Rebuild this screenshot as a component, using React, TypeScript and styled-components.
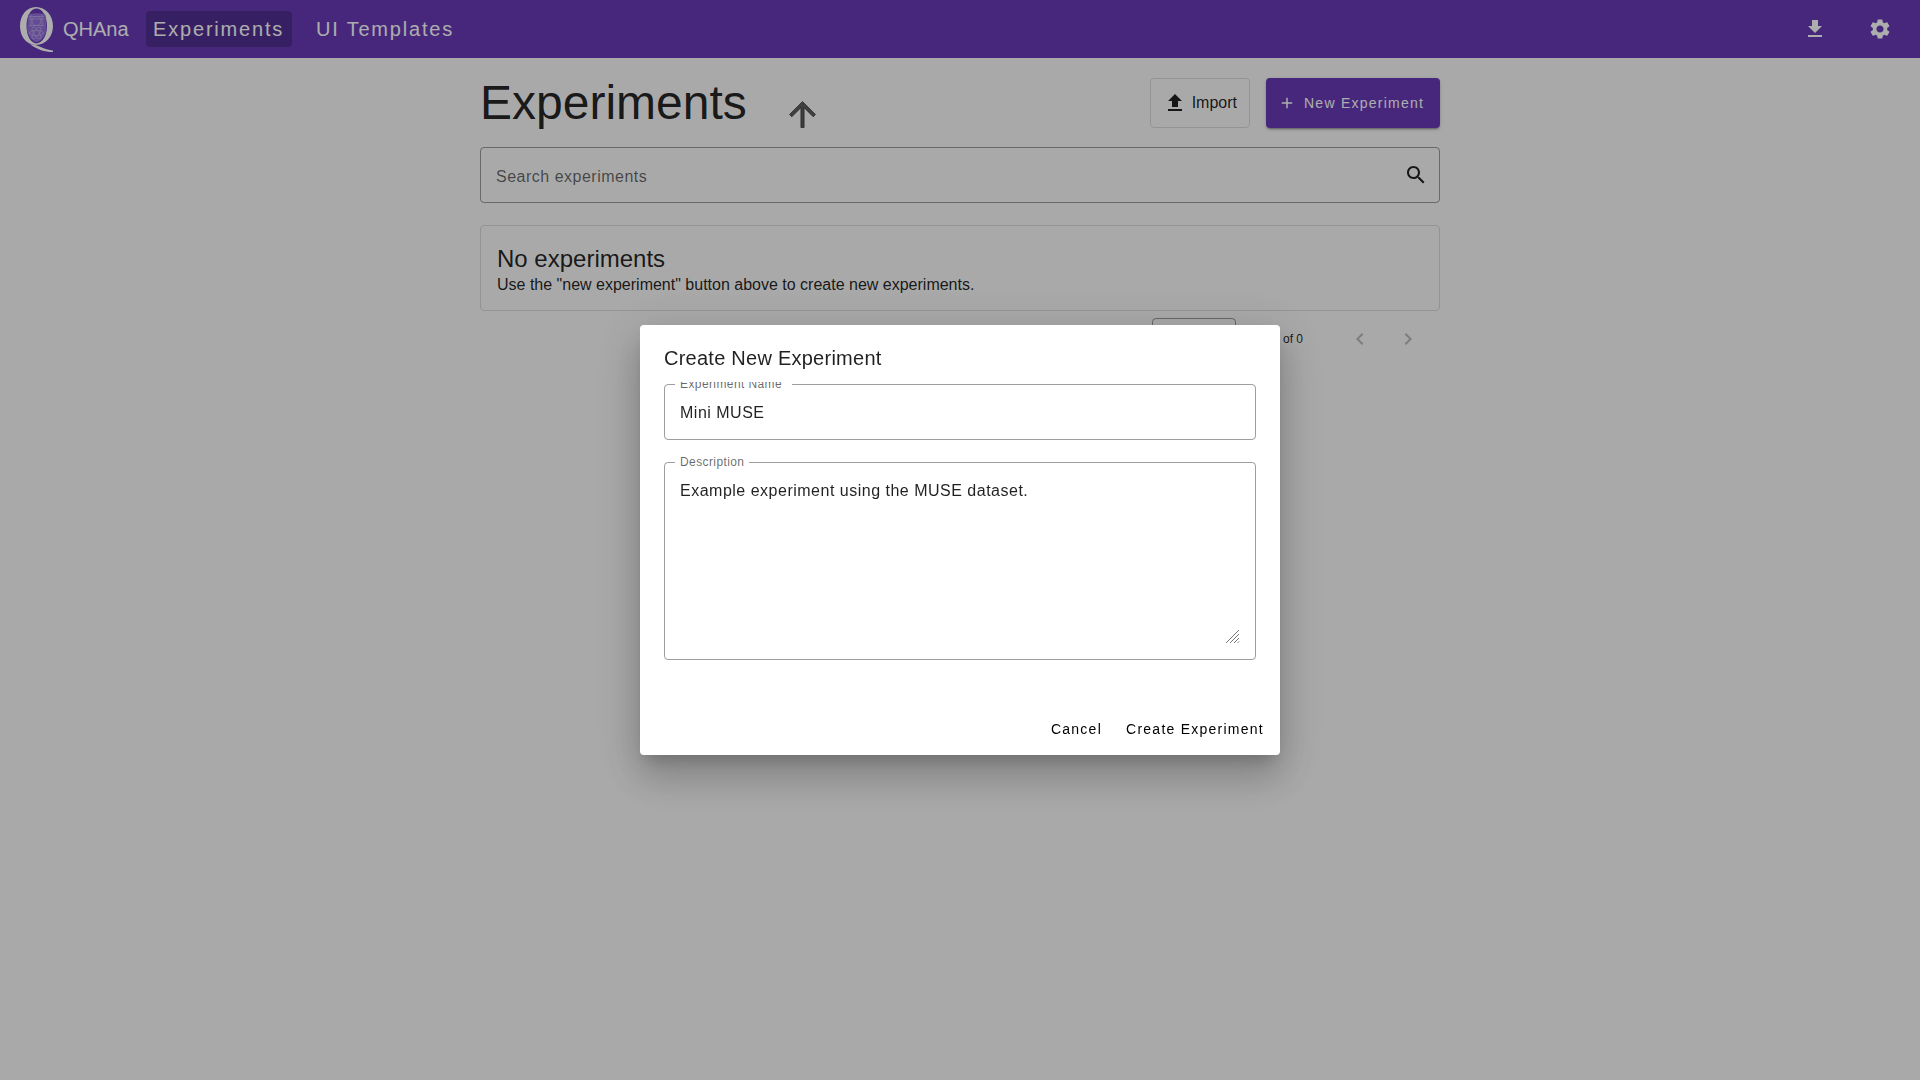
import React from "react";
import styled, { createGlobalStyle } from "styled-components";

const Global = createGlobalStyle`
  html, body { margin: 0; padding: 0; height: 100%; background: #fafafa; }
  body { font-family: "Liberation Sans", Arial, sans-serif; color: rgba(0,0,0,.87); overflow: hidden; }
  * { box-sizing: border-box; }
`;

const AppBar = styled.header`
  height: 58px;
  background: #673ab7;
  color: #fff;
  display: flex;
  align-items: center;
  padding: 0 20px 0 19px;
`;
const Brand = styled.div`
  display: flex;
  align-items: center;
  gap: 9px;
  margin-right: 17px;
  font-size: 20px;
`;
const NavLink = styled.a<{ $active?: boolean }>`
  display: flex;
  align-items: center;
  height: 36px;
  padding: 0 7.5px;
  margin-right: 17px;
  font-size: 20px;
  letter-spacing: 1.8px;
  border-radius: 4px;
  background: ${(p) => (p.$active ? "rgba(0,0,0,.2)" : "transparent")};
`;
const Spacer = styled.div`
  flex: 1;
`;
const BarIcon = styled.button`
  width: 40px;
  height: 40px;
  margin-left: 25px;
  border: 0;
  padding: 0;
  background: none;
  color: #fff;
  display: flex;
  align-items: center;
  justify-content: center;
`;
const Main = styled.main`
  width: 960px;
  margin: 0 auto;
`;
const TitleRow = styled.div`
  display: flex;
  align-items: flex-start;
  padding-top: 20px;
  height: 89px;
`;
const PageTitle = styled.h1`
  margin: 0;
  font-size: 48px;
  font-weight: 400;
  line-height: 50px;
  color: rgba(0,0,0,.87);
`;
const SortButton = styled.button`
  width: 40px;
  height: 40px;
  margin: 16px 0 0 36px;
  padding: 0;
  border: 0;
  background: none;
  color: rgba(0,0,0,.62);
  display: flex;
  align-items: center;
  justify-content: center;
  svg path { stroke: currentColor; stroke-width: .5px; }
`;
const TitleActions = styled.div`
  margin-left: auto;
  display: flex;
  gap: 16px;
`;
const ImportButton = styled.button`
  width: 100px;
  height: 50px;
  display: flex;
  align-items: center;
  justify-content: flex-end;
  gap: 5px;
  padding: 0 12px 0 0;
  border: 1px solid rgba(0,0,0,.12);
  border-radius: 4px;
  background: none;
  font: 400 16px "Liberation Sans", Arial, sans-serif;
  color: rgba(0,0,0,.87);
`;
const PrimaryButton = styled.button`
  width: 174px;
  height: 50px;
  display: flex;
  align-items: center;
  gap: 8px;
  padding: 0 0 0 12px;
  border: 0;
  border-radius: 4px;
  background: #673ab7;
  color: #fff;
  font: 400 14px "Liberation Sans", Arial, sans-serif;
  letter-spacing: 1.25px;
  box-shadow: 0 3px 1px -2px rgba(0,0,0,.2), 0 2px 2px 0 rgba(0,0,0,.14), 0 1px 5px 0 rgba(0,0,0,.12);
`;
const SearchField = styled.div`
  height: 56px;
  margin-bottom: 22px;
  display: flex;
  align-items: center;
  justify-content: space-between;
  padding: 0 11px 0 15px;
  border: 1px solid rgba(0,0,0,.38);
  border-radius: 4px;
`;
const SearchInput = styled.input`
  flex: 1;
  border: 0;
  outline: 0;
  padding: 3px 0 0;
  background: none;
  font: 400 16px "Liberation Sans", Arial, sans-serif;
  letter-spacing: .5px;
  &::placeholder { color: rgba(0,0,0,.6); opacity: 1; }
`;
const EmptyCard = styled.section`
  height: 86px;
  padding: 19px 16px 0;
  border: 1px solid rgba(0,0,0,.12);
  border-radius: 4px;
`;
const EmptyTitle = styled.h2`
  margin: 0;
  font-size: 24px;
  font-weight: 400;
  line-height: 28px;
`;
const EmptyText = styled.p`
  margin: 2px 0 0;
  font-size: 16px;
  line-height: 20px;
`;
const Paginator = styled.div`
  display: flex;
  align-items: flex-start;
  justify-content: flex-end;
  padding: 7px 12px 0 0;
`;
const PageSelect = styled.div`
  width: 84px;
  height: 56px;
  border: 1px solid rgba(0,0,0,.38);
  border-radius: 4px;
`;
const RangeLabel = styled.span`
  width: 67px;
  margin: 14px 29px 0 0;
  text-align: right;
  font-size: 12px;
  line-height: 14px;
`;
const PageButton = styled.button`
  width: 40px;
  height: 40px;
  margin: 1px 0 0 8px;
  padding: 0;
  border: 0;
  background: none;
  color: rgba(0,0,0,.26);
  display: flex;
  align-items: center;
  justify-content: center;
`;
const Backdrop = styled.div`
  position: fixed;
  inset: 0;
  background: rgba(0,0,0,.32);
  display: flex;
  align-items: center;
  justify-content: center;
`;
const Dialog = styled.div`
  width: 640px;
  height: 430px;
  display: flex;
  flex-direction: column;
  background: #fff;
  border-radius: 4px;
  box-shadow: 0 11px 15px -7px rgba(0,0,0,.2), 0 24px 38px 3px rgba(0,0,0,.14), 0 9px 46px 8px rgba(0,0,0,.12);
`;
const DialogTitle = styled.h2`
  height: 57px;
  margin: 0;
  padding: 20px 24px 0;
  font-size: 20px;
  font-weight: 400;
  line-height: 26px;
  letter-spacing: .25px;
  color: rgba(0,0,0,.87);
`;
const DialogBody = styled.div`
  flex: 1;
  min-height: 0;
  overflow: hidden;
  padding: 2px 24px 0;
  display: flex;
  flex-direction: column;
  gap: 22px;
`;
const Field = styled.div<{ $height: number }>`
  position: relative;
  height: ${(p) => p.$height}px;
  flex: none;
  border: 1px solid rgba(0,0,0,.38);
  border-radius: 4px;
`;
const FieldLabel = styled.label<{ $trail: number }>`
  position: absolute;
  top: -8px;
  left: 10px;
  padding: 0 ${(p) => p.$trail}px 0 5px;
  background: #fff;
  font-size: 12px;
  line-height: 14px;
  letter-spacing: .4px;
  color: rgba(0,0,0,.6);
`;
const TextInput = styled.input`
  display: block;
  width: 100%;
  height: 100%;
  padding: 2px 15px 0;
  border: 0;
  outline: 0;
  background: none;
  font: 400 16px "Liberation Sans", Arial, sans-serif;
  letter-spacing: .5px;
  color: rgba(0,0,0,.87);
`;
const TextArea = styled.textarea`
  display: block;
  width: 100%;
  height: 165px;
  margin-top: 18px;
  padding: 0 15px;
  border: 0;
  outline: 0;
  background: none;
  resize: none;
  font: 400 16px/20px "Liberation Sans", Arial, sans-serif;
  letter-spacing: .5px;
  color: rgba(0,0,0,.87);
`;
const ResizeGrip = styled.svg`
  position: absolute;
  right: 15px;
  bottom: 15px;
  width: 15px;
  height: 15px;
`;
const DialogActions = styled.div`
  display: flex;
  justify-content: flex-end;
  gap: 8px;
  padding: 0 8px 8px;
`;
const TextButton = styled.button`
  height: 36px;
  padding: 0 8px;
  border: 0;
  background: none;
  font: 400 14px "Liberation Sans", Arial, sans-serif;
  letter-spacing: 1.25px;
  color: #000;
`;

const Icon = ({ d, size = 24 }: { d: string; size?: number }) => (
  <svg width={size} height={size} viewBox="0 0 24 24" fill="currentColor" aria-hidden="true">
    <path d={d} />
  </svg>
);

const paths = {
  download: "M19 9h-4V3H9v6H5l7 7 7-7zM5 18v2h14v-2H5z",
  upload: "M9 16h6v-6h4l-7-7-7 7h4zm-4 2h14v2H5z",
  up: "M4 12l1.41 1.41L11 7.83V20h2V7.83l5.58 5.59L20 12l-8-8-8 8z",
  add: "M19 13h-6v6h-2v-6H5v-2h6V5h2v6h6v2z",
  search: "M15.5 14h-.79l-.28-.27C15.41 12.59 16 11.11 16 9.5 16 5.91 13.09 3 9.5 3S3 5.91 3 9.5 5.91 16 9.5 16c1.61 0 3.09-.59 4.23-1.57l.27.28v.79l5 4.99L20.49 19l-4.99-5zm-6 0C7.01 14 5 11.99 5 9.5S7.01 5 9.5 5 14 7.01 14 9.5 11.99 14 9.5 14z",
  left: "M15.41 7.41L14 6l-6 6 6 6 1.41-1.41L10.83 12z",
  right: "M10 6L8.59 7.41 13.17 12l-4.58 4.59L10 18l6-6z",
  gear: "M19.14,12.94c0.04-0.3,0.06-0.61,0.06-0.94c0-0.32-0.02-0.64-0.07-0.94l2.03-1.58c0.18-0.14,0.23-0.41,0.12-0.61 l-1.92-3.32c-0.12-0.22-0.37-0.29-0.59-0.22l-2.39,0.96c-0.5-0.38-1.03-0.7-1.62-0.94L14.4,2.81c-0.04-0.24-0.24-0.41-0.48-0.41 h-3.84c-0.24,0-0.43,0.17-0.47,0.41L9.25,5.35C8.66,5.59,8.12,5.92,7.63,6.29L5.24,5.33c-0.22-0.08-0.47,0-0.59,0.22L2.74,8.87 C2.62,9.08,2.66,9.34,2.86,9.48l2.03,1.58C4.84,11.36,4.8,11.69,4.8,12s0.02,0.64,0.07,0.94l-2.03,1.58 c-0.18,0.14-0.23,0.41-0.12,0.61l1.92,3.32c0.12,0.22,0.37,0.29,0.59,0.22l2.39-0.96c0.5,0.38,1.03,0.7,1.62,0.94l0.36,2.54 c0.05,0.24,0.24,0.41,0.48,0.41h3.84c0.24,0,0.44-0.17,0.47-0.41l0.36-2.54c0.59-0.24,1.13-0.56,1.62-0.94l2.39,0.96 c0.22,0.08,0.47,0,0.59-0.22l1.92-3.32c0.12-0.22,0.07-0.47-0.12-0.61L19.14,12.94z M12,15.6c-1.98,0-3.6-1.62-3.6-3.6 s1.62-3.6,3.6-3.6s3.6,1.62,3.6,3.6S13.98,15.6,12,15.6z",
};

const Logo = () => (
  <svg width="35" height="46" viewBox="0 0 35 46" aria-hidden="true" style={{ flex: "none" }}>
    <path
      fillRule="evenodd"
      d="M17 1C26.5 1 34 9.5 34 20S26.5 39 17 39 1 30.5 1 20 7.5 1 17 1ZM17.5 2.6C12 2.6 7.5 10 7.5 20S12 37.4 17.5 37.4 28 30 28 20 23 2.6 17.5 2.6Z"
      fill="#fff"
    />
    <path d="M14 38.5 C20 39.5 25 43.5 34 44.5 L34 46 C25 46 19 43.5 11 38.5 Z" fill="#fff" />
    <path d="M9 9 C11 6.5 24 6.5 26.5 9 L27.5 24 C26.5 30 22 35 17.5 36.5 C13 35 9 30 8 24 Z" fill="#9470dc" />
    <g fill="none" stroke="#bca6ea" strokeWidth=".8">
      <circle cx="17.5" cy="15" r="4.5" />
      <ellipse cx="17.5" cy="27" rx="7" ry="2.6" />
      <ellipse cx="17.5" cy="27" rx="7" ry="2.6" transform="rotate(55 17.5 27)" />
      <ellipse cx="17.5" cy="27" rx="7" ry="2.6" transform="rotate(-55 17.5 27)" />
      <path d="M10 10.5h15M10 13h15M10 19.5h15M12 8.5v12M23 8.5v12" />
    </g>
  </svg>
);

export default function App() {
  return (
    <>
      <Global />
      <AppBar>
        <Brand>
          <Logo />
          <span>QHAna</span>
        </Brand>
        <NavLink $active>Experiments</NavLink>
        <NavLink>UI Templates</NavLink>
        <Spacer />
        <BarIcon><Icon d={paths.download} /></BarIcon>
        <BarIcon><Icon d={paths.gear} /></BarIcon>
      </AppBar>
      <Main>
        <TitleRow>
          <PageTitle>Experiments</PageTitle>
          <SortButton><Icon d={paths.up} size={39} /></SortButton>
          <TitleActions>
            <ImportButton><Icon d={paths.upload} />Import</ImportButton>
            <PrimaryButton><Icon d={paths.add} size={18} />New Experiment</PrimaryButton>
          </TitleActions>
        </TitleRow>
        <SearchField>
          <SearchInput placeholder="Search experiments" />
          <Icon d={paths.search} />
        </SearchField>
        <EmptyCard>
          <EmptyTitle>No experiments</EmptyTitle>
          <EmptyText>Use the "new experiment" button above to create new experiments.</EmptyText>
        </EmptyCard>
        <Paginator>
          <PageSelect />
          <RangeLabel>0 of 0</RangeLabel>
          <PageButton><Icon d={paths.left} /></PageButton>
          <PageButton><Icon d={paths.right} /></PageButton>
        </Paginator>
      </Main>
      <Backdrop>
        <Dialog>
          <DialogTitle>Create New Experiment</DialogTitle>
          <DialogBody>
            <Field $height={56}>
              <FieldLabel $trail={10}>Experiment Name</FieldLabel>
              <TextInput readOnly value="Mini MUSE" />
            </Field>
            <Field $height={198}>
              <FieldLabel $trail={5}>Description</FieldLabel>
              <TextArea readOnly value="Example experiment using the MUSE dataset." />
              <ResizeGrip viewBox="0 0 15 15" aria-hidden="true">
                <path d="M1 14L14 1M5 14L14 5M9 14L14 9M12.5 14L14 12.5" stroke="#777" strokeWidth="1" fill="none" />
              </ResizeGrip>
            </Field>
          </DialogBody>
          <DialogActions>
            <TextButton>Cancel</TextButton>
            <TextButton>Create Experiment</TextButton>
          </DialogActions>
        </Dialog>
      </Backdrop>
    </>
  );
}
